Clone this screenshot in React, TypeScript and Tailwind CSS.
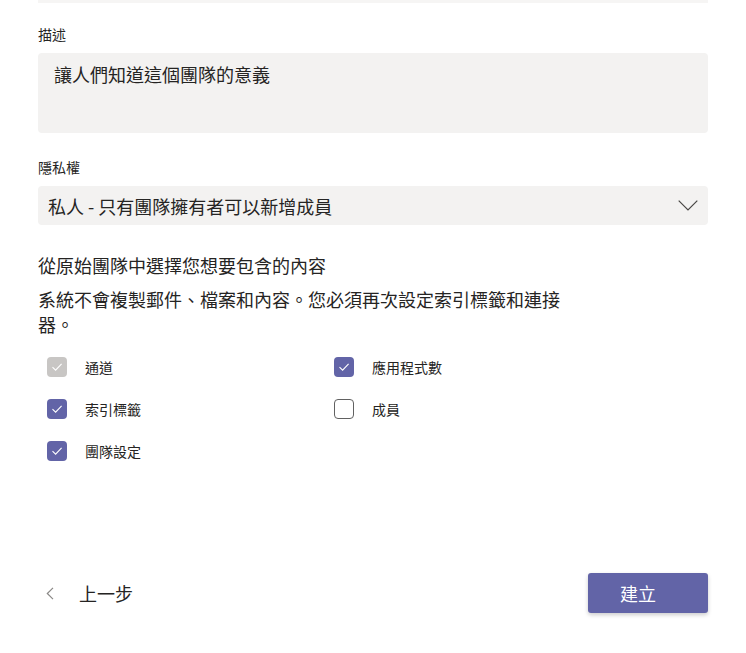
import React from "react";

const font = { fontFamily: '"Noto Sans CJK TC", "Noto Sans", sans-serif' };

function Check({ state }: { state: "checked" | "disabled" | "unchecked" }) {
  if (state === "unchecked") {
    return <div className="w-[20px] h-[20px] rounded-[4px] border border-[#616161] bg-white" />;
  }
  const bg = state === "checked" ? "bg-[#6264a7]" : "bg-[#c8c6c4]";
  return (
    <div className={`w-[20px] h-[20px] rounded-[4px] ${bg} flex items-center justify-center`}>
      <svg width="12" height="10" viewBox="0 0 12 10" fill="none">
        <path d="M1.5 5.2 L4.6 8.2 L10.6 1.8" stroke="white" strokeWidth="1.1" />
      </svg>
    </div>
  );
}

function Item({ state, label }: { state: "checked" | "disabled" | "unchecked"; label: string }) {
  return (
    <div className="flex items-center h-[20px] pl-[9px]">
      <Check state={state} />
      <span className="ml-[18px] text-[14px] text-[#252423] leading-[20px]">{label}</span>
    </div>
  );
}

export default function App() {
  return (
    <div className="w-[746px] h-[653px] bg-white px-[38px] text-[#252423]" style={font}>
      <div className="h-[3px] bg-[#f6f5f4]" />
      <div className="mt-[21px] text-[14px] leading-[20px]">描述</div>
      <div className="mt-[9px] h-[80px] bg-[#f3f2f1] rounded-[4px] pl-[16px] pt-[9px] text-[18px] leading-[24px]">
        讓人們知道這個團隊的意義
      </div>
      <div className="mt-[24px] text-[14px] leading-[20px]">隱私權</div>
      <div className="mt-[9px] h-[39px] bg-[#f3f2f1] rounded-[4px] pl-[10px] pr-[10px] flex items-center justify-between">
        <span className="text-[18px] leading-[24px]">私人 - 只有團隊擁有者可以新增成員</span>
        <svg width="20" height="11" viewBox="0 0 20 11" fill="none">
          <path d="M0.7 0.7 L10 10 L19.3 0.7" stroke="#484644" strokeWidth="1.2" />
        </svg>
      </div>
      <div className="mt-[28px] text-[18px] leading-[24px]">從原始團隊中選擇您想要包含的內容</div>
      <div className="mt-[10px] w-[526px] text-[18px] leading-[25px]">
        系統不會複製郵件、檔案和內容。您必須再次設定索引標籤和連接器。
      </div>
      <div className="mt-[20px] grid grid-cols-[287px_1fr] gap-y-[22px]">
        <Item state="disabled" label="通道" />
        <Item state="checked" label="應用程式數" />
        <Item state="checked" label="索引標籤" />
        <Item state="unchecked" label="成員" />
        <Item state="checked" label="團隊設定" />
      </div>
      <div className="mt-[112px] flex items-center justify-between">
        <div className="flex items-center pl-[8px]">
          <svg width="8" height="13" viewBox="0 0 8 13" fill="none">
            <path d="M7 0.8 L1.3 6.5 L7 12.2" stroke="#8a8886" strokeWidth="1.2" />
          </svg>
          <span className="ml-[25px] text-[18px] leading-[24px]">上一步</span>
        </div>
        <button className="w-[120px] h-[40px] rounded-[3px] bg-[#6264a7] text-white text-[18px] leading-[24px] pr-[20px] shadow-[0_2px_4px_rgba(0,0,0,0.2)]">
          建立
        </button>
      </div>
    </div>
  );
}
